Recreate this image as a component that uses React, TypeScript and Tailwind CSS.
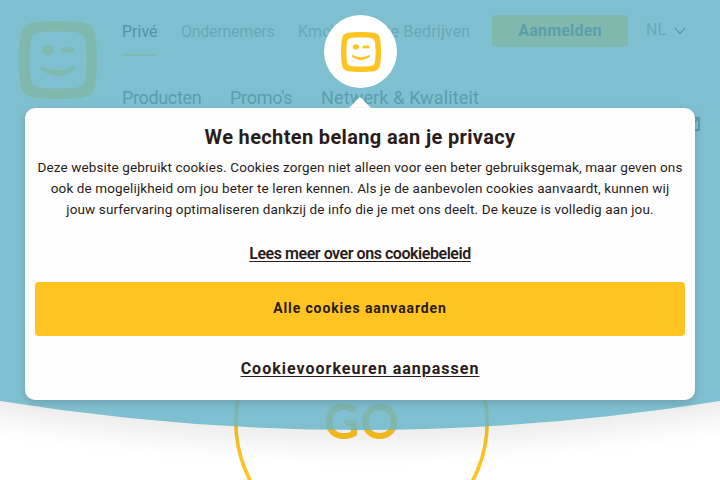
function Smiley({ className }: { className: string }) {
  return (
    <svg viewBox="0 0 78 78" className={className} fill="currentColor" aria-hidden="true">
      <path
        fillRule="evenodd"
        d="M39 0C48 0 57 .5 64 1.500C71 2.500 75 6 76 13C77.500 20 78 30 78 39C78 48 77.500 58 76 65C75 72 71 75.500 64 76.500C57 77.500 48 78 39 78C30 78 21 77.500 14 76.500C7 75.500 3 72 2 65C.5 58 0 48 0 39C0 30 .5 20 2 13C3 6 7 2.500 14 1.500C21 .5 30 0 39 0ZM39 10.500C31 10.500 25 10.800 20 11.500C15 12.300 12.500 15 11.700 20C11 26 10.500 33 10.500 39C10.500 45 11 52 11.700 58C12.500 63 15 65.700 20 66.500C25 67.200 31 67.500 39 67.500C47 67.500 53 67.200 58 66.500C63 65.700 65.500 63 66.300 58C67 52 67.500 45 67.500 39C67.500 33 67 26 66.300 20C65.500 15 63 12.300 58 11.500C53 10.800 47 10.500 39 10.500Z"
      />
      <ellipse cx="29" cy="29" rx="6.100" ry="5.200" />
      <path d="M42.300 27Q49 25.500 55 27V32Q49 31.200 42.300 32Z" />
      <path d="M21.700 44.500Q39 54 56.300 44.500V48.500Q39 61.500 21.700 48.500Z" />
    </svg>
  );
}

export default function App() {
  return (
    <div className="relative h-[480px] w-[720px] overflow-hidden bg-white font-[Roboto,Arial,sans-serif] text-[#2a1c1a]">
      <svg className="absolute inset-0" width="720" height="480" viewBox="0 0 720 480" aria-hidden="true">
        <defs>
          <clipPath id="below">
            <path d="M0 401Q360 459 720 401V480H0Z" />
          </clipPath>
          <filter id="soft" x="-20%" y="-20%" width="140%" height="140%">
            <feGaussianBlur stdDeviation="14" />
          </filter>
        </defs>
        <circle cx="361.500" cy="422" r="125.700" fill="none" stroke="#ffc421" strokeWidth="3.600" />
        <text x="361.500" y="438" textAnchor="middle" fontFamily="Lato" fontSize="47" textLength="74" fill="#ffc421" stroke="#ffc421" strokeWidth="2">GO</text>
        <g clipPath="url(#below)">
          <path d="M-120 388L0 415Q360 473 720 415L840 388V100H-120Z" fill="#000" opacity=".08" filter="url(#soft)" />
        </g>
        <path d="M0 0H720V401Q360 459 0 401Z" fill="#67b4c7" fillOpacity=".842" />
      </svg>

      <header className="relative flex h-[140px] text-[#5b9eaf]">
        <Smiley className="ml-[19px] mt-[21px] size-[78px] shrink-0 text-[#7fb8ad]" />
        <div className="ml-[25px] flex grow flex-col">
          <div className="flex h-[56px] text-base leading-5 whitespace-nowrap">
            <nav className="flex w-[370px] pt-[22px] text-[#68a9b9]">
              <a className="mr-6 w-[35px] border-b-2 border-[#7fb8ad] text-[#5295a6]">Privé</a>
              <a className="mr-6 w-[93px] tracking-[-0.25px]">Ondernemers</a>
              <a className="tracking-[0.15px]">Kmo's &amp; Grote Bedrijven</a>
            </nav>
            <button className="mt-[15px] h-8 w-[136px] rounded bg-[#7fb8ad] text-base font-bold tracking-[0.2px] text-[#5a9fae]">Aanmelden</button>
            <div className="ml-[18px] flex gap-[8px] pt-5 text-[#68a9b9]">
              <span className="w-[20px]">NL</span>
              <svg className="mt-[7px] h-[8px] w-3" viewBox="0 0 12 8" fill="none" stroke="#559aaa" strokeWidth="1.200"><path d="M1 1L6 6.500L11 1" /></svg>
            </div>
          </div>
          <nav className="mt-[31px] flex text-[18px] leading-[22px] whitespace-nowrap">
            <a className="w-[108px] tracking-[-0.350px]">Producten</a>
            <a className="w-[91px] tracking-[-0.250px]">Promo's</a>
            <a className="tracking-[0.15px]">Netwerk &amp; Kwaliteit</a>
          </nav>
          <svg className="mt-[8px] mr-[20px] h-[14px] w-[20px] shrink-0 self-end" viewBox="0 0 20 14" fill="none" stroke="#5b9eaf" strokeWidth="2"><path d="M1 1H19V13H1ZM1 1L10 9L19 1" /></svg>
        </div>
      </header>

      <div className="absolute left-[324px] top-[15px] flex size-[73px] items-center justify-center rounded-full bg-white text-[#ffc421]">
        <Smiley className="size-10" />
      </div>
      <svg className="absolute left-[348px] top-[97px]" width="24" height="12" viewBox="0 0 24 12" fill="#fff" aria-hidden="true"><path d="M0 12L12 0L24 12Z" /></svg>

      <section role="dialog" className="absolute left-[25px] top-[108px] flex h-[292px] w-[670px] flex-col items-center rounded-[10px] bg-[#fefefe] px-[10px] whitespace-nowrap shadow-[0_3px_10px_rgba(0,0,0,0.16)]">
        <h1 className="mt-[16px] text-[20px] leading-[26px] font-bold tracking-[0.350px]">We hechten belang aan je privacy</h1>
        <div className="mt-[7px] flex flex-col items-center text-[13.5px] leading-[21px] tracking-[0.120px]">
          <p>Deze website gebruikt cookies. Cookies zorgen niet alleen voor een beter gebruiksgemak, maar geven ons</p>
          <p>ook de mogelijkheid om jou beter te leren kennen. Als je de aanbevolen cookies aanvaardt, kunnen wij</p>
          <p>jouw surfervaring optimaliseren dankzij de info die je met ons deelt. De keuze is volledig aan jou.</p>
        </div>
        <a className="mt-[24px] text-base leading-5 font-semibold tracking-[-0.450px] underline underline-offset-2">Lees meer over ons cookiebeleid</a>
        <button className="mt-[18px] h-[54px] w-full shrink-0 rounded bg-[#ffc421] pb-px text-[14px] font-bold tracking-[0.870px]">Alle cookies aanvaarden</button>
        <a className="mt-[23px] text-base leading-5 font-bold tracking-[1px] underline underline-offset-2">Cookievoorkeuren aanpassen</a>
      </section>
    </div>
  );
}
